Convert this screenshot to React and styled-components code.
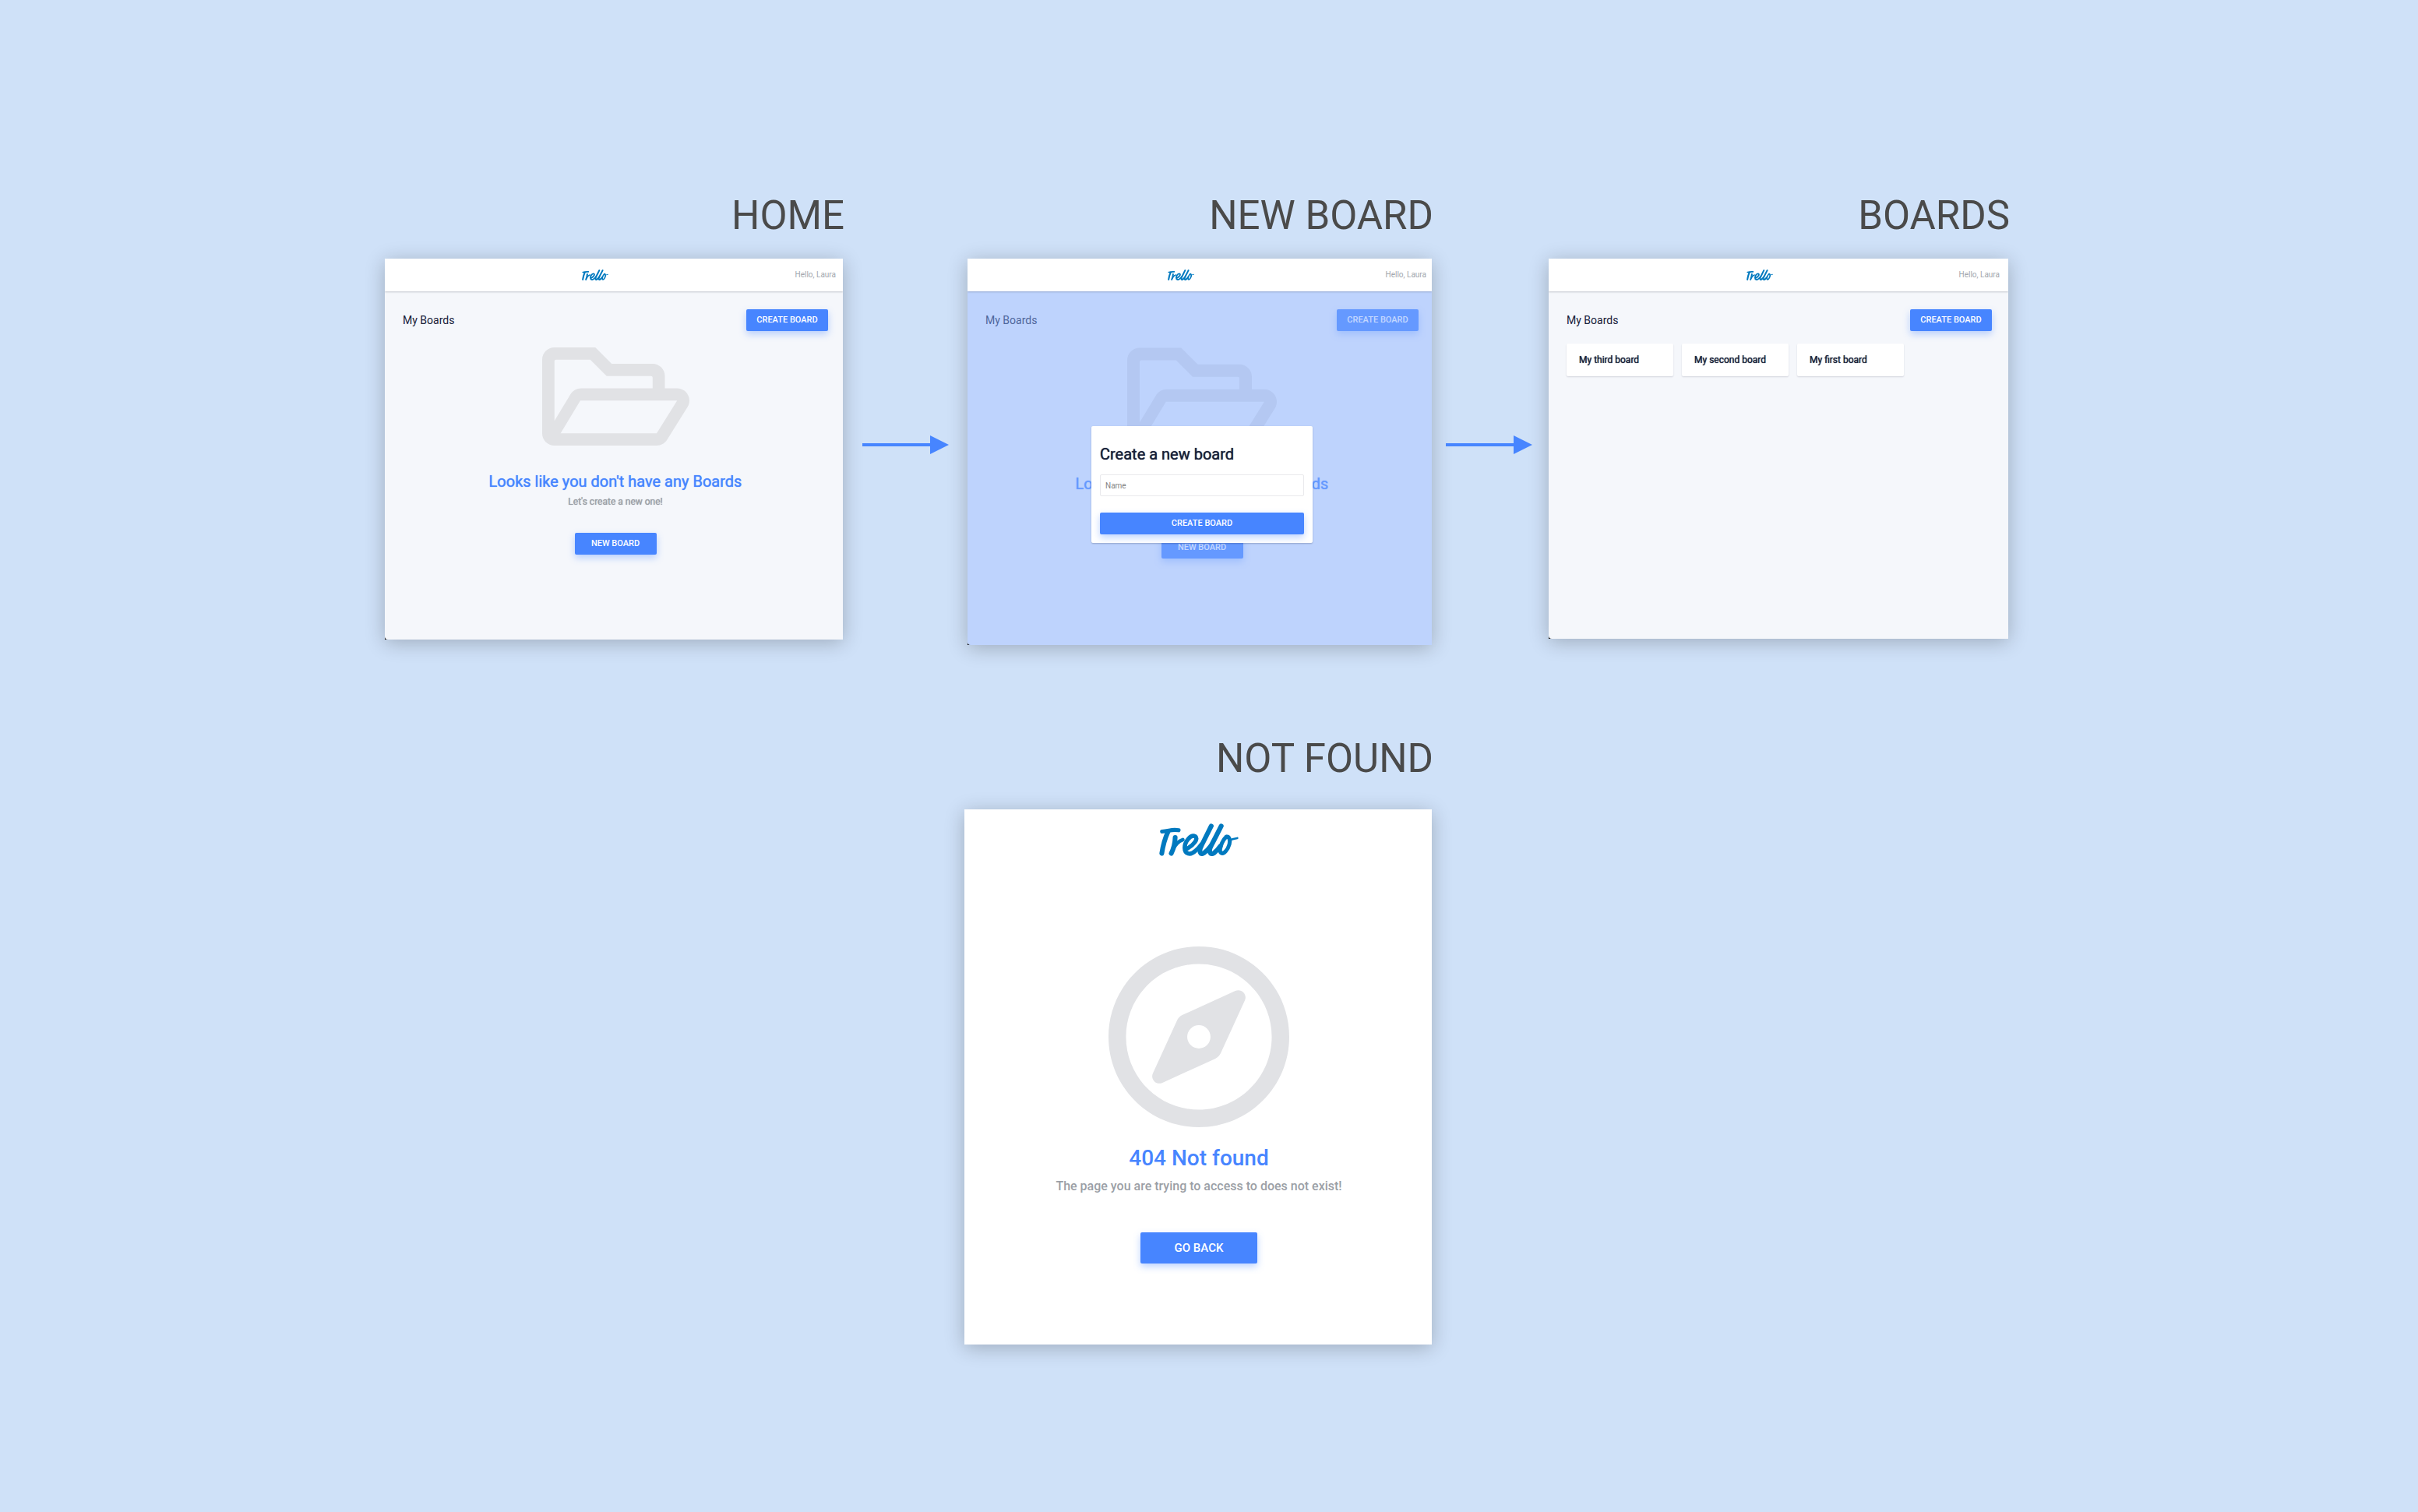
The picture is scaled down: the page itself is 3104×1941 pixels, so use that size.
import React from "react";
import styled, { createGlobalStyle } from "styled-components";
import { FaRegFolderOpen, FaRegCompass } from "react-icons/fa";

const GlobalStyle = createGlobalStyle`
  *, *::before, *::after { box-sizing: border-box; }
  body {
    margin: 0;
    min-height: 100vh;
    background: #cfe1f8;
    color: #172038;
    font-family: Roboto, "Liberation Sans", sans-serif;
  }
  h1, h2, h3, p { margin: 0; font-weight: 400; }
`;

const Sheet = styled.main`
  display: grid;
  grid-template-columns: 588fr 160fr 596fr 150fr 590fr;
  row-gap: 116px;
  align-items: start;
  padding: 247px 526px 215px 494px;
`;

const Step = styled.section`
  display: flex;
  flex-direction: column;
  min-width: 0;
`;

const WideStep = styled(Step)`
  grid-column: 3;
  margin-left: -4px;
`;

const StepTitle = styled.h1`
  margin: 0 -2px ${(p) => p.$space || 25}px 0;
  color: #4a4a4a;
  font-size: 51px;
  line-height: 60px;
  text-align: right;
  white-space: nowrap;
`;

const Connector = styled.div`
  padding: 312px 0 0 ${(p) => p.$inset}px;
`;

const Frame = styled.div`
  display: flex;
  min-height: ${(p) => p.$height}px;
  background: #000;
  box-shadow: 0 4px 24px rgba(0, 0, 0, 0.24);
`;

const Screen = styled.div`
  display: flex;
  flex: 1;
  flex-direction: column;
  overflow: hidden;
  border-bottom-left-radius: 4px;
  background: #f5f7fb;
`;

const Header = styled.header`
  position: relative;
  z-index: 1;
  display: flex;
  align-items: center;
  justify-content: space-between;
  height: 42px;
  padding: 0 ${(p) => p.$gutter - 10}px 0 ${(p) => p.$gutter - 5}px;
  background: #fff;
  box-shadow: 0 1px 2px rgba(23, 32, 56, 0.22);
`;

const Greeting = styled.span`
  color: #a2a6ad;
  font-size: 10px;
  line-height: 12px;
`;

const Body = styled.div`
  position: relative;
  display: flex;
  flex: 1;
  flex-direction: column;
  padding: 23px ${(p) => p.$gutter}px 0 23px;
`;

const Toolbar = styled.div`
  display: flex;
  align-items: center;
  justify-content: space-between;
`;

const ToolbarTitle = styled.h2`
  font-size: 14px;
  line-height: 20px;
`;

const Button = styled.button`
  min-width: ${(p) => (p.$large ? 150 : 105)}px;
  height: ${(p) => (p.$large ? 40 : 28)}px;
  padding: 0 12px;
  border: 0;
  border-radius: 2px;
  background: #4785ff;
  box-shadow: 0 4px 10px rgba(71, 133, 255, 0.36);
  color: #fff;
  font: 500 ${(p) => (p.$large ? 15 : 11)}px/16px Roboto, "Liberation Sans", sans-serif;
  text-transform: uppercase;
  cursor: pointer;
`;

const Empty = styled.div`
  display: flex;
  flex-direction: column;
  align-items: center;
  color: #e1e2e5;
`;

const EmptyTitle = styled.h3`
  margin-top: 13px;
  color: #4785ff;
  font-size: 20px;
  line-height: 24px;
  text-shadow: 0 0 1px currentColor;
  white-space: nowrap;
`;

const EmptyText = styled.p`
  margin: 6px 0 ${(p) => p.$space}px;
  color: #9b9fa6;
  font-size: 12px;
  line-height: 16px;
  text-shadow: 0 0 1px currentColor;
`;

const CardGrid = styled.ul`
  display: grid;
  grid-template-columns: repeat(auto-fill, 137px);
  gap: 11px;
  margin: 16px 0 0;
  padding: 0;
  list-style: none;
`;

const Card = styled.li`
  padding: 13px 16px;
  border-radius: 2px;
  background: #fff;
  box-shadow: 0 1px 2px rgba(23, 32, 56, 0.16);
  font-size: 12px;
  line-height: 16px;
  text-shadow: 0 0 1px currentColor;
`;

const Overlay = styled.div`
  position: absolute;
  inset: 0;
  display: flex;
  align-items: flex-start;
  justify-content: center;
  padding: 173px 17px 0 23px;
  background: rgba(133, 173, 255, 0.49);
`;

const Dialog = styled.form`
  display: flex;
  flex-direction: column;
  width: 284px;
  padding: 24px 11px 11px;
  border-radius: 2px;
  background: #fff;
  box-shadow: 0 1px 2px rgba(23, 32, 56, 0.25);
`;

const DialogTitle = styled.h3`
  font-size: 20px;
  line-height: 24px;
  text-shadow: 0 0 1px currentColor;
`;

const Field = styled.input`
  height: 28px;
  margin: 14px 0 21px;
  padding: 0 6px;
  border: 1px solid #e9e9ec;
  border-radius: 2px;
  background: #fff;
  color: #172038;
  font: 400 10px/12px Roboto, "Liberation Sans", sans-serif;
  &::placeholder { color: #858585; opacity: 1; }
`;

const Missing = styled.div`
  display: flex;
  flex: 1;
  flex-direction: column;
  align-items: center;
  padding: 18px 0 0 2px;
  background: #fff;
  color: #e1e2e5;
`;

const CompassIcon = styled(FaRegCompass)`
  width: 232px;
  height: 240px;
  margin-top: 112px;
`;

const MissingTitle = styled.h2`
  margin-top: 20px;
  color: #4785ff;
  font-size: 28px;
  font-weight: 500;
  line-height: 32px;
`;

const MissingText = styled.p`
  margin: 10px 0 49px;
  color: #9b9fa6;
  font-size: 16px;
  font-weight: 500;
  line-height: 20px;
`;

function Logo({ width = 34, height = 14 }) {
  return (
    <svg width={width} height={height} viewBox="56 51 302 124" role="img" aria-label="Trello">
      <g fill="none" stroke="#0079bf" strokeWidth="18" strokeLinecap="round" strokeLinejoin="round">
        <path strokeWidth="15" d="M67 82 Q78 81 93 78 Q114 74 130 77" />
        <path d="M89 84 Q73 119 66 165" />
        <path d="M117 104 Q116 137 102 165" />
        <path strokeWidth="14" d="M110 148 Q122 121 146 113" />
        <path strokeWidth="16" d="M164 146 C186 134 207 109 193 100 C176 91 153 121 153 143 C153 168 175 173 193 156 Q206 145 217 130" />
        <path d="M254 61 Q236 97 218 133 C205 157 212 174 227 163 Q240 153 251 138" />
        <path d="M292 61 Q274 97 255 133 C242 157 249 174 265 163 Q278 152 288 138" />
        <path strokeWidth="15" d="M311 102 C295 116 283 151 290 162 C300 172 318 150 323 130 C327 113 322 99 311 102" />
        <path strokeWidth="8" d="M325 114 Q338 109 353 107" />
      </g>
    </svg>
  );
}

function Arrow({ inset }) {
  return (
    <Connector $inset={inset}>
      <svg width="111" height="24" viewBox="0 0 111 24" aria-hidden="true">
        <path d="M0 10h87V0l24 12-24 12V14H0z" fill="#4785ff" />
      </svg>
    </Connector>
  );
}

function TopBar({ gutter }) {
  return (
    <Header $gutter={gutter}>
      <span />
      <Logo />
      <Greeting>Hello, Laura</Greeting>
    </Header>
  );
}

function BoardsToolbar() {
  return (
    <Toolbar>
      <ToolbarTitle>My Boards</ToolbarTitle>
      <Button type="button">Create board</Button>
    </Toolbar>
  );
}

function EmptyBoards({ iconWidth, iconHeight, space }) {
  return (
    <Empty>
      <FaRegFolderOpen style={{ width: iconWidth, height: iconHeight }} />
      <EmptyTitle>Looks like you don't have any Boards</EmptyTitle>
      <EmptyText $space={space}>Let's create a new one!</EmptyText>
      <Button type="button">New board</Button>
    </Empty>
  );
}

const boards = ["My third board", "My second board", "My first board"];

export default function App() {
  return (
    <>
      <GlobalStyle />
      <Sheet>
        <Step>
          <StepTitle>HOME</StepTitle>
          <Frame $height={489}>
            <Screen>
              <TopBar gutter={19} />
              <Body $gutter={19}>
                <BoardsToolbar />
                <EmptyBoards iconWidth={189} iconHeight={168} space={32} />
              </Body>
            </Screen>
          </Frame>
        </Step>
        <Arrow inset={25} />
        <Step>
          <StepTitle>NEW BOARD</StepTitle>
          <Frame $height={496}>
            <Screen>
              <TopBar gutter={17} />
              <Body $gutter={17}>
                <BoardsToolbar />
                <EmptyBoards iconWidth={192} iconHeight={171} space={34} />
                <Overlay>
                  <Dialog onSubmit={(e) => e.preventDefault()}>
                    <DialogTitle>Create a new board</DialogTitle>
                    <Field type="text" placeholder="Name" aria-label="Name" />
                    <Button type="submit">Create board</Button>
                  </Dialog>
                </Overlay>
              </Body>
            </Screen>
          </Frame>
        </Step>
        <Arrow inset={18} />
        <Step>
          <StepTitle>BOARDS</StepTitle>
          <Frame $height={488}>
            <Screen>
              <TopBar gutter={21} />
              <Body $gutter={21}>
                <BoardsToolbar />
                <CardGrid>
                  {boards.map((name) => (
                    <Card key={name}>{name}</Card>
                  ))}
                </CardGrid>
              </Body>
            </Screen>
          </Frame>
        </Step>
        <WideStep>
          <StepTitle $space={35}>NOT FOUND</StepTitle>
          <Frame $height={687}>
            <Missing>
              <Logo width={102} height={42} />
              <CompassIcon />
              <MissingTitle>404 Not found</MissingTitle>
              <MissingText>The page you are trying to access to does not exist!</MissingText>
              <Button type="button" $large>Go back</Button>
            </Missing>
          </Frame>
        </WideStep>
      </Sheet>
    </>
  );
}
